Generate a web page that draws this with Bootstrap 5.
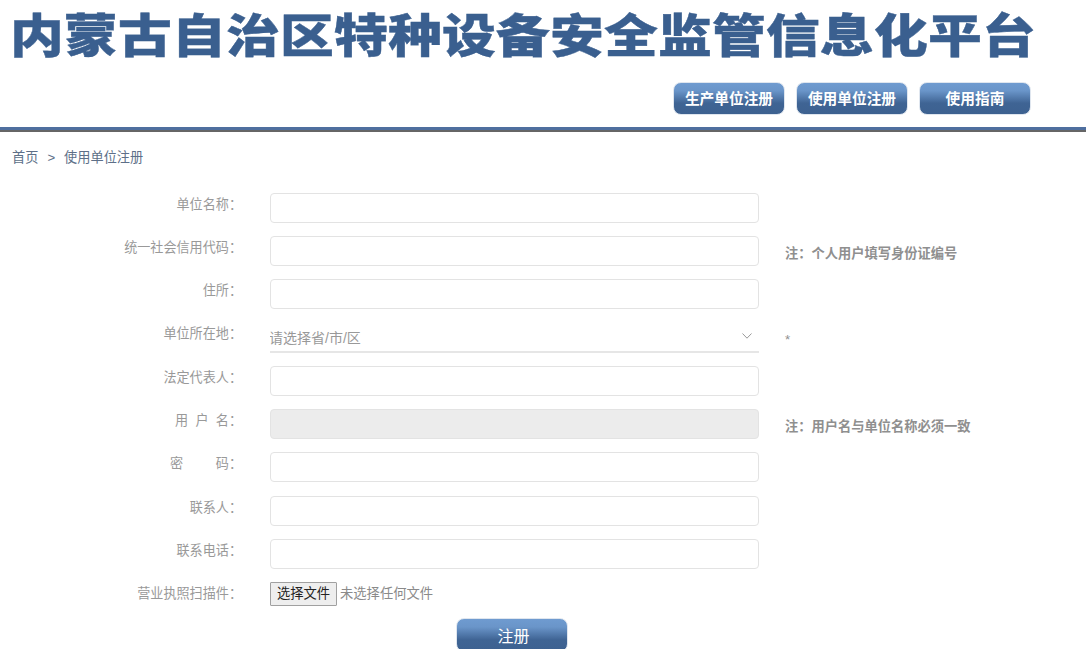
<!DOCTYPE html>
<html lang="zh-CN">
<head>
<meta charset="utf-8">
<title>使用单位注册</title>
<link href="https://cdn.jsdelivr.net/npm/bootstrap@5.3.0/dist/css/bootstrap.min.css" rel="stylesheet">
<style>
html,body{height:649px;overflow:hidden}
body{font-family:"Liberation Sans","Noto Sans CJK SC",sans-serif;font-size:13px;color:#999;background:#fff}
.site-top{height:127px}
.site-rule{height:5px;background:linear-gradient(#4f6f9f 0,#4f6f9f 70%,#666 70%,#666 100%)}
.site-title{margin:0;padding:6px 0 0 10px;height:82px;white-space:nowrap;line-height:52px}
.title-text{display:inline-block;font-family:"Noto Sans CJK SC",sans-serif;font-weight:900;font-size:46px;line-height:52px;letter-spacing:.15px;color:#3a5f8f;-webkit-text-stroke:.4px #3a5f8f;transform:scaleX(1.17);transform-origin:left center}
.top-btns{gap:11px;padding-right:55px}
.grad-btn{background:linear-gradient(#6f9bd0 0,#6a95c9 25%,#3f6494 65%,#3d6190 100%);color:#fff;border:1px solid #dfe6ef;border-radius:8px;font-family:"Noto Sans CJK SC",sans-serif}
.top-btn{width:112px;height:33px;font-size:14.7px;font-weight:700;line-height:30px;padding:0;text-align:center}
.crumb-line{padding:16px 0 0 12px;height:60.6px;font-size:13.2px;color:#5d6f88;line-height:20px}
.crumb-line span{margin:0 9px}
.reg-rows{gap:13.3px}
.reg-row{height:30px;gap:0}
.reg-label{width:242px;flex:none;text-align:right;line-height:24px;height:24px;color:#999;font-size:13.1px}
.reg-ctl{width:489px;margin-left:28px;flex:none;position:relative}
.reg-input.form-control{height:30px;padding:0 8px;border:1px solid #e3e3e3;border-radius:4px;background:#fff}
.reg-input.form-control:disabled{background:#ececec}
.reg-select.form-select{height:31px;padding:3px 24px 0 0;text-indent:-1px;border:0;border-bottom:2px solid #e6e6e6;border-radius:0;color:#999;font-size:14px;background-image:none}
.select-arrow{position:absolute;right:7px;top:11px;width:10px;height:6px;pointer-events:none}
.reg-note{margin-left:26px;font-weight:700;font-size:13.25px;line-height:16px;padding-top:10px;color:#8f8f8f;white-space:nowrap}
.file-row{height:24px;margin-top:0}
.file-btn{width:67px;height:24px;padding:0;font-size:13.3px;line-height:20px;color:#222;background:#eee;border:1px solid #a0a0a0;border-radius:1px}
.file-text{font-size:13.3px;color:#8a8a8a;margin-left:3px;line-height:24px}
.submit-wrap{padding:11.4px 0 0 456px}
.submit-btn{width:112px;height:34px;font-size:16px;line-height:33px;padding:0 0 0 3px;text-align:center}
</style>
</head>
<body>
<header>
  <div class="site-top">
    <h1 class="site-title"><span class="title-text">内蒙古自治区特种设备安全监管信息化平台</span></h1>
    <nav class="top-btns d-flex justify-content-end">
      <a class="grad-btn top-btn text-decoration-none" href="#">生产单位注册</a>
      <a class="grad-btn top-btn text-decoration-none" href="#">使用单位注册</a>
      <a class="grad-btn top-btn text-decoration-none" href="#">使用指南</a>
    </nav>
  </div>
  <div class="site-rule"></div>
</header>
<div class="crumb-line">首页<span>&gt;</span>使用单位注册</div>
<form class="d-flex flex-column reg-rows">
  <div class="reg-row d-flex"><label class="reg-label">单位名称：</label><div class="reg-ctl"><input class="form-control reg-input"></div></div>
  <div class="reg-row d-flex"><label class="reg-label">统一社会信用代码：</label><div class="reg-ctl"><input class="form-control reg-input"></div><div class="reg-note">注：个人用户填写身份证编号</div></div>
  <div class="reg-row d-flex"><label class="reg-label">住所：</label><div class="reg-ctl"><input class="form-control reg-input"></div></div>
  <div class="reg-row d-flex"><label class="reg-label">单位所在地：</label><div class="reg-ctl"><select class="form-select reg-select"><option>请选择省/市/区</option></select><svg class="select-arrow" viewBox="0 0 10 6"><path d="M.5.5 5 5.2 9.5.5" fill="none" stroke="#999" stroke-width="1"/></svg></div><div class="reg-note fw-normal">*</div></div>
  <div class="reg-row d-flex"><label class="reg-label">法定代表人：</label><div class="reg-ctl"><input class="form-control reg-input"></div></div>
  <div class="reg-row d-flex"><label class="reg-label">用&nbsp;&nbsp;户&nbsp;&nbsp;名：</label><div class="reg-ctl"><input class="form-control reg-input" disabled></div><div class="reg-note">注：用户名与单位名称必须一致</div></div>
  <div class="reg-row d-flex"><label class="reg-label">密&nbsp;&nbsp;&nbsp;&nbsp;&nbsp;&nbsp;&nbsp;&nbsp;&nbsp;码：</label><div class="reg-ctl"><input class="form-control reg-input" type="password"></div></div>
  <div class="reg-row d-flex"><label class="reg-label">联系人：</label><div class="reg-ctl"><input class="form-control reg-input"></div></div>
  <div class="reg-row d-flex"><label class="reg-label">联系电话：</label><div class="reg-ctl"><input class="form-control reg-input"></div></div>
  <div class="file-row d-flex"><label class="reg-label">营业执照扫描件：</label><div class="reg-ctl d-flex"><button type="button" class="file-btn">选择文件</button><span class="file-text">未选择任何文件</span></div></div>
</form>
<div class="submit-wrap"><button type="button" class="grad-btn submit-btn">注册</button></div>
<script src="https://cdn.jsdelivr.net/npm/bootstrap@5.3.0/dist/js/bootstrap.bundle.min.js"></script>
</body>
</html>
